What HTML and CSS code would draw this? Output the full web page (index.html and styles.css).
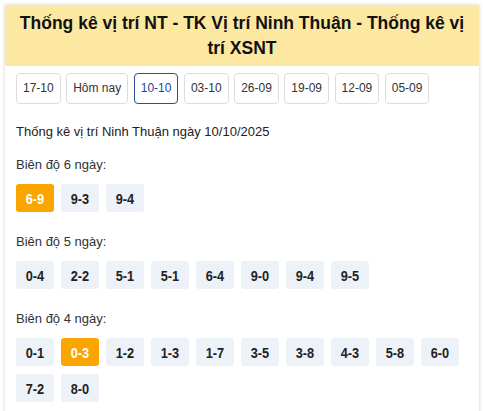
FILE: index.html
```html
<!DOCTYPE html>
<html lang="vi">
<head>
<meta charset="utf-8">
<title>Thống kê vị trí NT</title>
<link rel="stylesheet" href="styles.css">
</head>
<body>
<div class="page">
  <div class="card">
    <h1 class="title">Thống kê vị trí NT - TK Vị trí Ninh Thuận - Thống kê vị trí XSNT</h1>
    <div class="dates">
      <a class="date">17-10</a>
      <a class="date">Hôm nay</a>
      <a class="date active">10-10</a>
      <a class="date">03-10</a>
      <a class="date">26-09</a>
      <a class="date">19-09</a>
      <a class="date">12-09</a>
      <a class="date">05-09</a>
    </div>
    <div class="content">
      <p class="subtitle">Thống kê vị trí Ninh Thuận ngày 10/10/2025</p>
      <div class="section">
        <div class="label">Biên độ 6 ngày:</div>
        <div class="chips">
          <span class="chip hot"><b>6-9</b></span>
          <span class="chip"><b>9-3</b></span>
          <span class="chip"><b>9-4</b></span>
        </div>
      </div>
      <div class="section">
        <div class="label">Biên độ 5 ngày:</div>
        <div class="chips">
          <span class="chip"><b>0-4</b></span>
          <span class="chip"><b>2-2</b></span>
          <span class="chip"><b>5-1</b></span>
          <span class="chip"><b>5-1</b></span>
          <span class="chip"><b>6-4</b></span>
          <span class="chip"><b>9-0</b></span>
          <span class="chip"><b>9-4</b></span>
          <span class="chip"><b>9-5</b></span>
        </div>
      </div>
      <div class="section">
        <div class="label">Biên độ 4 ngày:</div>
        <div class="chips">
          <span class="chip"><b>0-1</b></span>
          <span class="chip hot"><b>0-3</b></span>
          <span class="chip"><b>1-2</b></span>
          <span class="chip"><b>1-3</b></span>
          <span class="chip"><b>1-7</b></span>
          <span class="chip"><b>3-5</b></span>
          <span class="chip"><b>3-8</b></span>
          <span class="chip"><b>4-3</b></span>
          <span class="chip"><b>5-8</b></span>
          <span class="chip"><b>6-0</b></span>
          <span class="chip"><b>7-2</b></span>
          <span class="chip"><b>8-0</b></span>
        </div>
      </div>
    </div>
  </div>
</div>
</body>
</html>
```
FILE: styles.css
```css
html, body {
  margin: 0;
  padding: 0;
  background: #fff;
}
body {
  font-family: "Liberation Sans", Arial, sans-serif;
  color: #222;
}
.page {
  padding: 5px 5px 0;
}
.card {
  background: #fff;
  box-shadow: 0 0 4px rgba(0, 0, 0, 0.18);
  min-height: 420px;
}
.title {
  margin: 0;
  background: #fde8a2;
  padding: 6px 8px 5px;
  text-align: center;
  font-size: 17.5px;
  line-height: 25px;
  font-weight: bold;
  color: #111;
}
.dates {
  display: flex;
  gap: 5.5px;
  padding: 7px 11px 0;
}
.date {
  display: block;
  border: 1px solid #dcdcdc;
  border-radius: 4px;
  padding: 0 6px;
  line-height: 29px;
  font-size: 12px;
  color: #333;
  text-decoration: none;
}
.date.active {
  border-color: #2a4a9a;
  color: #1f3fa0;
}
.content {
  padding: 0 11px;
}
.subtitle {
  margin: 19px 0 0;
  font-size: 13px;
  line-height: 18px;
  color: #222;
}
.section {
  margin-top: 21px;
}
.section:first-of-type {
  margin-top: 15px;
}
.label {
  font-size: 13px;
  line-height: 18px;
  color: #333;
  margin-bottom: 10px;
}
.chips {
  display: flex;
  flex-wrap: wrap;
  gap: 8px 7px;
}
.chip {
  display: flex;
  align-items: center;
  justify-content: center;
  width: 38px;
  height: 28px;
  background: #edf1f8;
  border-radius: 3px;
  font-size: 15px;
  color: #222;
}
.chip b {
  display: inline-block;
  font-weight: bold;
  transform: scaleX(0.85);
}
.chip.hot {
  background: #fba600;
  color: #fff;
}
```
